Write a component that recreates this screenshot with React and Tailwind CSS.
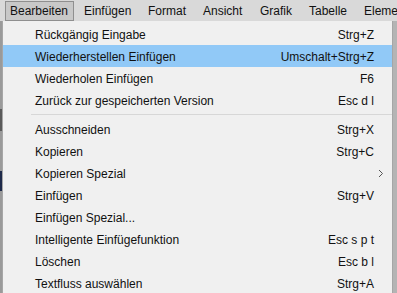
import React from "react";

const menuBar = [
  { name: "Bearbeiten", w: "w-[74px]", active: true },
  { name: "Einfügen", w: "w-[64px]" },
  { name: "Format", w: "w-[55px]" },
  { name: "Ansicht", w: "w-[57px]" },
  { name: "Grafik", w: "w-[49px]" },
  { name: "Tabelle", w: "w-[55px]" },
  { name: "Element", w: "w-[60px]" },
];

const topItems = [
  { label: "Rückgängig Eingabe", shortcut: "Strg+Z" },
  { label: "Wiederherstellen Einfügen", shortcut: "Umschalt+Strg+Z", active: true },
  { label: "Wiederholen Einfügen", shortcut: "F6" },
  { label: "Zurück zur gespeicherten Version", shortcut: "Esc d l" },
];

const bottomItems = [
  { label: "Ausschneiden", shortcut: "Strg+X" },
  { label: "Kopieren", shortcut: "Strg+C" },
  { label: "Kopieren Spezial", submenu: true },
  { label: "Einfügen", shortcut: "Strg+V" },
  { label: "Einfügen Spezial..." },
  { label: "Intelligente Einfügefunktion", shortcut: "Esc s p t" },
  { label: "Löschen", shortcut: "Esc b l" },
  { label: "Textfluss auswählen", shortcut: "Strg+A" },
];

const MenuItem = ({ item }) => (
  <div
    className={`flex items-center h-[22px] pl-[32px] pr-[18px] pt-px ${
      item.active ? "bg-[#91c9f7]" : ""
    }`}
  >
    <span className="flex-1">{item.label}</span>
    {item.shortcut && <span>{item.shortcut}</span>}
    {item.submenu && (
      <svg width="6" height="9" viewBox="0 0 6 9" className="-mr-[10px]">
        <path d="M1 1 L4.5 4.5 L1 8" fill="none" stroke="#555" strokeWidth="1" />
      </svg>
    )}
  </div>
);

const App = () => {
  return (
    <div
      className="w-[397px] h-[293px] overflow-hidden bg-[#d9d9d9] text-[12px] text-[#111] flex flex-col"
      style={{ fontFamily: '"Liberation Sans", Arial, sans-serif' }}
    >
      <div className="flex items-center h-[21px] pl-[5px] shrink-0 whitespace-nowrap">
        {menuBar.map((m) => (
          <div key={m.name} className={`${m.w} shrink-0 h-[20px] mt-[1px]`}>
            <div
              className={`h-full flex items-center px-[4px] ${
                m.active
                  ? "w-[69px] bg-[#c8c8c8] border border-[#8f8f8f]"
                  : "border border-transparent"
              }`}
            >
              {m.name}
            </div>
          </div>
        ))}
      </div>
      <div className="flex flex-1 min-h-0">
        <div className="w-[2px] bg-[#9a9a9a] flex flex-col">
          <div className="h-[88px]" />
          <div className="h-[22px] bg-[#5a5a5a]" />
          <div className="h-[40px]" />
          <div className="h-[20px] bg-[#1e2a4a]" />
        </div>
        <div className="flex-1 bg-[#f0f0f0] border-l border-r border-[#a6a6a6] pt-[2px]">
          {topItems.map((item) => (
            <MenuItem key={item.label} item={item} />
          ))}
          <div className="h-[7px] flex items-center pl-[28px]">
            <div className="h-px w-full bg-[#d7d7d7]" />
          </div>
          {bottomItems.map((item) => (
            <MenuItem key={item.label} item={item} />
          ))}
        </div>
        <div className="w-[4px] bg-[#b4b4b4]" />
      </div>
    </div>
  );
};

export default App;
